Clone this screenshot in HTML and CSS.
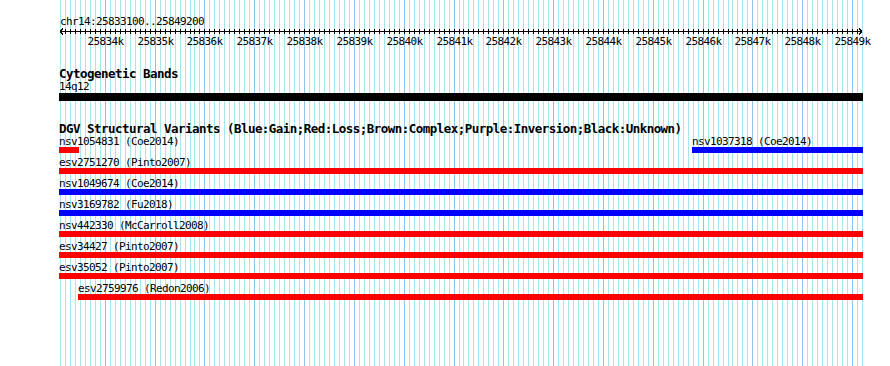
FILE: index.html
```html
<!DOCTYPE html>
<html lang="en">
<head>
	<meta charset="UTF-8">
	<title>chr14:25833100..25849200</title>
	<link rel="stylesheet" href="styles.css">
</head>
<body>
	<div class="view">
		<svg class="grid" width="890" height="366"></svg>

		<div class="ruler">
			<div class="coords">chr14:25833100..25849200</div>
			<svg class="scale" width="890" height="7"></svg>
			<div class="ticks">
				<span data-bp="25834000">25834k</span>
				<span data-bp="25835000">25835k</span>
				<span data-bp="25836000">25836k</span>
				<span data-bp="25837000">25837k</span>
				<span data-bp="25838000">25838k</span>
				<span data-bp="25839000">25839k</span>
				<span data-bp="25840000">25840k</span>
				<span data-bp="25841000">25841k</span>
				<span data-bp="25842000">25842k</span>
				<span data-bp="25843000">25843k</span>
				<span data-bp="25844000">25844k</span>
				<span data-bp="25845000">25845k</span>
				<span data-bp="25846000">25846k</span>
				<span data-bp="25847000">25847k</span>
				<span data-bp="25848000">25848k</span>
				<span data-bp="25849000">25849k</span>
			</div>
		</div>

		<div class="track bands">
			<h2>Cytogenetic Bands</h2>
			<div class="row">
				<div class="feat" style="margin-left:59px">
					<span class="lbl">14q12</span>
					<div class="bar band" style="width:804px"></div>
				</div>
			</div>
		</div>

		<div class="track dgv">
			<h2>DGV Structural Variants (Blue:Gain;Red:Loss;Brown:Complex;Purple:Inversion;Black:Unknown)</h2>
			<div class="row">
				<div class="feat" style="margin-left:59px">
					<span class="lbl">nsv1054831 (Coe2014)</span>
					<div class="bar loss" style="width:20px"></div>
				</div>
				<div class="feat" style="margin-left:692px">
					<span class="lbl">nsv1037318 (Coe2014)</span>
					<div class="bar gain" style="width:171px"></div>
				</div>
			</div>
			<div class="row">
				<div class="feat" style="margin-left:59px">
					<span class="lbl">esv2751270 (Pinto2007)</span>
					<div class="bar loss" style="width:804px"></div>
				</div>
			</div>
			<div class="row">
				<div class="feat" style="margin-left:59px">
					<span class="lbl">nsv1049674 (Coe2014)</span>
					<div class="bar gain" style="width:804px"></div>
				</div>
			</div>
			<div class="row">
				<div class="feat" style="margin-left:59px">
					<span class="lbl">nsv3169782 (Fu2018)</span>
					<div class="bar gain" style="width:804px"></div>
				</div>
			</div>
			<div class="row">
				<div class="feat" style="margin-left:59px">
					<span class="lbl">nsv442330 (McCarroll2008)</span>
					<div class="bar loss" style="width:804px"></div>
				</div>
			</div>
			<div class="row">
				<div class="feat" style="margin-left:59px">
					<span class="lbl">esv34427 (Pinto2007)</span>
					<div class="bar loss" style="width:804px"></div>
				</div>
			</div>
			<div class="row">
				<div class="feat" style="margin-left:59px">
					<span class="lbl">esv35052 (Pinto2007)</span>
					<div class="bar loss" style="width:804px"></div>
				</div>
			</div>
			<div class="row">
				<div class="feat" style="margin-left:78px">
					<span class="lbl">esv2759976 (Redon2006)</span>
					<div class="bar loss" style="width:785px"></div>
				</div>
			</div>
		</div>
	</div>

	<script src="script.js"></script>
</body>
</html>
```

FILE: styles.css
```css
body{
	margin: 0;
	background: #fff;
	color: #000;
	font-family: "DejaVu Sans Mono", "Liberation Mono", monospace;
	font-size: 11px;
	letter-spacing: -0.62px;
}
.view{
	position: relative;
	z-index: 0;
	width: 890px;
	height: 366px;
	overflow: hidden;
}
.grid{
	position: absolute;
	left: 0;
	top: 0;
	z-index: -1;
}
.grid .minor{
	stroke: #a6e7ed;
	stroke-width: 1;
}
.grid .major{
	stroke: #8cc3ef;
	stroke-width: 1;
}

/* ruler */
.ruler{
	padding-top: 15px;
}
.coords{
	margin-left: 60px;
	line-height: 13px;
	height: 13px;
}
.scale{
	display: block;
}
.scale line{
	stroke: #000;
	stroke-width: 1;
	shape-rendering: crispEdges;
}
.ticks{
	position: relative;
	height: 13px;
	line-height: 13px;
}
.ticks span{
	position: absolute;
	top: 0;
	transform: translateX(-50%);
	white-space: nowrap;
}

/* tracks */
.track h2{
	margin: 0 0 0 59px;
	font-size: 12.5px;
	letter-spacing: -0.53px;
	font-weight: bold;
	line-height: 13px;
	white-space: nowrap;
}
.bands{
	margin-top: 19px;
}
.bands h2{
	margin-bottom: 1px;
}
.dgv{
	margin-top: 21px;
}
.dgv h2{
	margin-bottom: 1px;
}
.row{
	display: grid;
	margin-bottom: 4px;
}
.feat{
	grid-area: 1 / 1;
	justify-self: start;
}
.lbl{
	display: block;
	line-height: 11px;
	height: 11px;
	white-space: nowrap;
}
.bar{
	height: 6px;
}
.bar.band{
	height: 8px;
	margin-top: 1px;
	background: #000;
}
.bar.loss{
	background: #ff0000;
}
.bar.gain{
	background: #0000ff;
}
```

FILE: script.js
```js
var START = 25833100
var END = 25849200
var X0 = 60
var X1 = 862
var svgNS = 'http://www.w3.org/2000/svg'

function xpos(bp){
	return Math.round(X0 + (bp - START) * (X1 - X0) / (END - START))
}

function addLine(svg, x1, y1, x2, y2, cls){
	var line = document.createElementNS(svgNS, 'line')
	line.setAttribute('x1', x1)
	line.setAttribute('y1', y1)
	line.setAttribute('x2', x2)
	line.setAttribute('y2', y2)
	if (cls) line.setAttribute('class', cls)
	svg.appendChild(line)
}

// grid lines every 100bp, darker every 1k
var grid = document.querySelector('.grid')
for (var bp = START; bp <= END; bp += 100){
	var x = xpos(bp) + 0.5
	addLine(grid, x, 0, x, 366, bp % 1000 == 0 ? 'major' : 'minor')
}

// scale bar with arrows at both ends
var scale = document.querySelector('.scale')
addLine(scale, X0, 3.5, X1, 3.5)
addLine(scale, X0, 3.5, X0 + 3, 0.5)
addLine(scale, X0, 3.5, X0 + 3, 6.5)
addLine(scale, X1, 3.5, X1 - 3, 0.5)
addLine(scale, X1, 3.5, X1 - 3, 6.5)
for (var t = START + 100; t < END; t += 100){
	var tx = xpos(t) + 0.5
	addLine(scale, tx, 1, tx, 6)
}

// tick labels
var labels = document.querySelectorAll('.ticks span')
for (var i = 0; i < labels.length; i++){
	labels[i].style.left = (xpos(+labels[i].dataset.bp) + 0.5) + 'px'
}
```
